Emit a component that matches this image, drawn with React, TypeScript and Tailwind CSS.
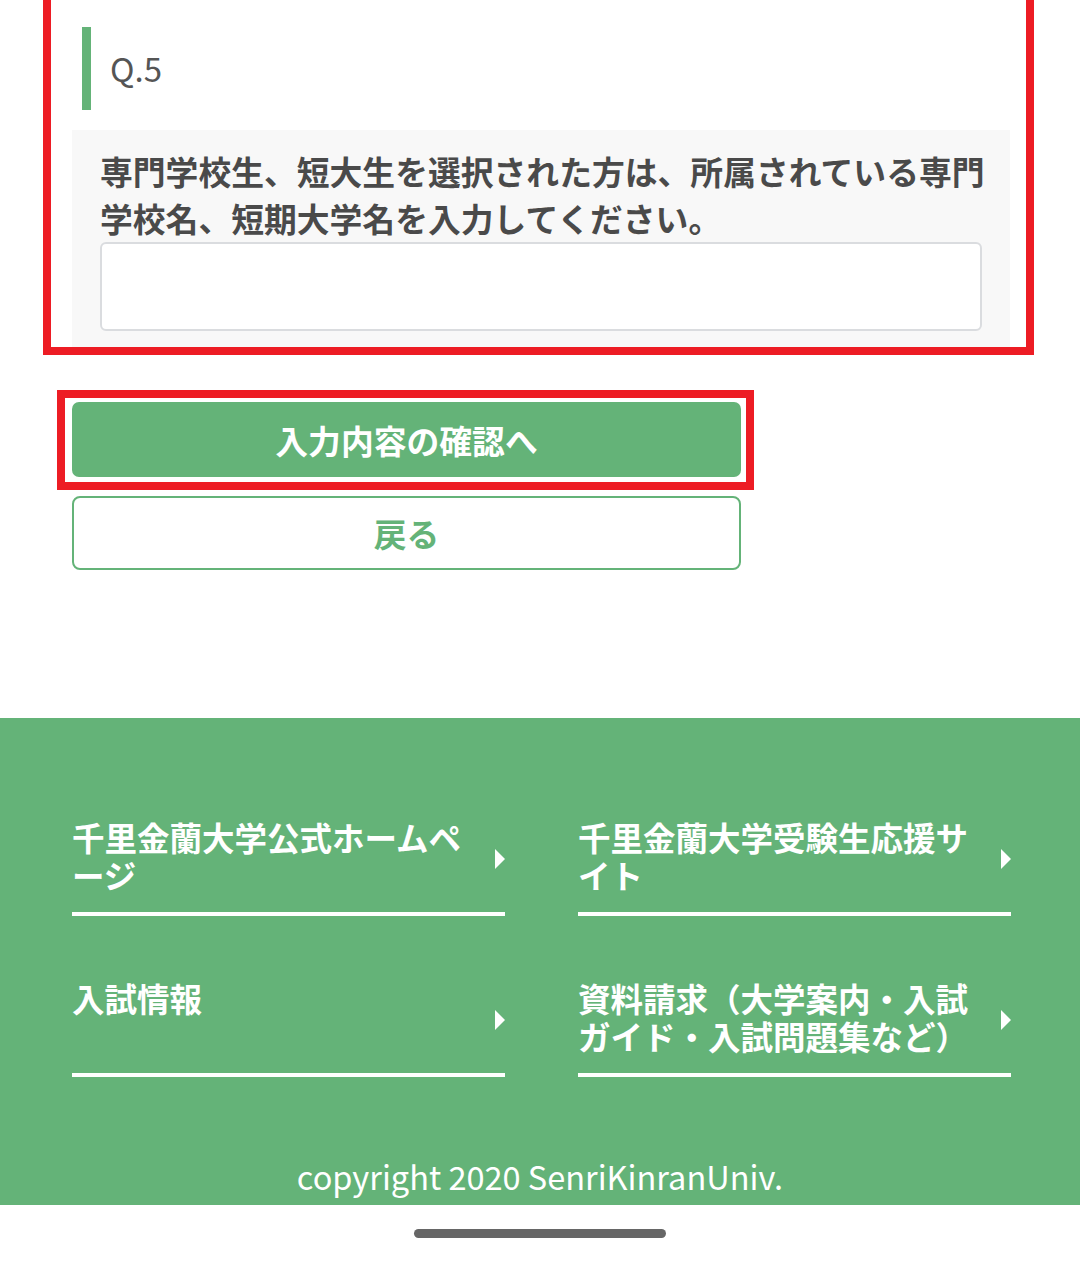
const FONT = "font-['Noto_Sans_CJK_JP','Noto_Sans',sans-serif]";

const LINKS = [
  "千里金蘭大学公式ホームページ",
  "千里金蘭大学受験生応援サイト",
  "入試情報",
  "資料請求（大学案内・入試ガイド・入試問題集など）",
];

function Chevron() {
  return (
    <svg width="10" height="20" viewBox="0 0 10 20" className="mt-[6px] shrink-0">
      <polygon points="0,0 10,10 0,20" fill="#ffffff" />
    </svg>
  );
}

function FooterLink({ label }: { label: string }) {
  return (
    <a href="#" className="block border-b-4 border-white pb-[18px]">
      <div className="flex items-center">
        <span className="min-h-[76px] flex-1 pr-[20px] text-[32.5px] font-bold leading-[38px] text-white">
          {label}
        </span>
        <Chevron />
      </div>
    </a>
  );
}

export default function App() {
  return (
    <div className={`${FONT} min-h-[1262px] w-[1080px] bg-white`}>
      {/* question block (highlighted) */}
      <div className="ml-[43px] w-[991px] border-8 border-t-0 border-[#ed1c24] pl-[21px] pr-[16px] pt-[27px]">
        <div className="ml-[10px] flex h-[83px] items-center border-l-[9px] border-[#64b378] pl-[19px]">
          <span className="text-[33px] leading-none text-[#555555]">Q.5</span>
        </div>
        <div className="mt-[20px] bg-[#f8f8f8] px-[28px] pb-[16px] pt-[17px]">
          <p className="mr-[-10px] text-[32.8px] font-bold leading-[47px] text-[#4a4a4a]">
            専門学校生、短大生を選択された方は、所属されている専門学校名、短期大学名を入力してください。
          </p>
          <input
            type="text"
            className="mt-[1px] block h-[89px] w-full rounded-[6px] border-2 border-[#dadcdf] bg-white px-4 text-[30px] outline-none"
          />
        </div>
      </div>

      {/* actions */}
      <div className="ml-[57px] mt-[35px] w-[697px] border-8 border-[#ed1c24] pb-[5px] pl-[7px] pr-[5px] pt-[4px]">
        <button className="flex h-[75px] w-full items-center justify-center rounded-[7px] bg-[#64b378] text-[32.8px] font-bold text-white">
          入力内容の確認へ
        </button>
      </div>
      <button className="ml-[72px] mt-[6px] flex h-[74px] w-[669px] items-center justify-center rounded-[8px] border-2 border-[#64b378] bg-white text-[32.8px] font-bold text-[#64b378]">
        戻る
      </button>

      {/* footer */}
      <footer className="mt-[148px] bg-[#64b378] pb-[9px] pt-[100px]">
        <div className="ml-[72px] grid w-[939px] grid-cols-2 gap-x-[73px] gap-y-[63px]">
          {LINKS.map((l) => (
            <FooterLink key={l} label={l} />
          ))}
        </div>
        <p className="mt-[79px] text-center text-[32.5px] leading-[40px] text-white">
          copyright 2020 SenriKinranUniv.
        </p>
      </footer>

      <div className="flex h-[57px] items-center justify-center">
        <div className="h-[9px] w-[252px] rounded-full bg-[#666666]" />
      </div>
    </div>
  );
}
